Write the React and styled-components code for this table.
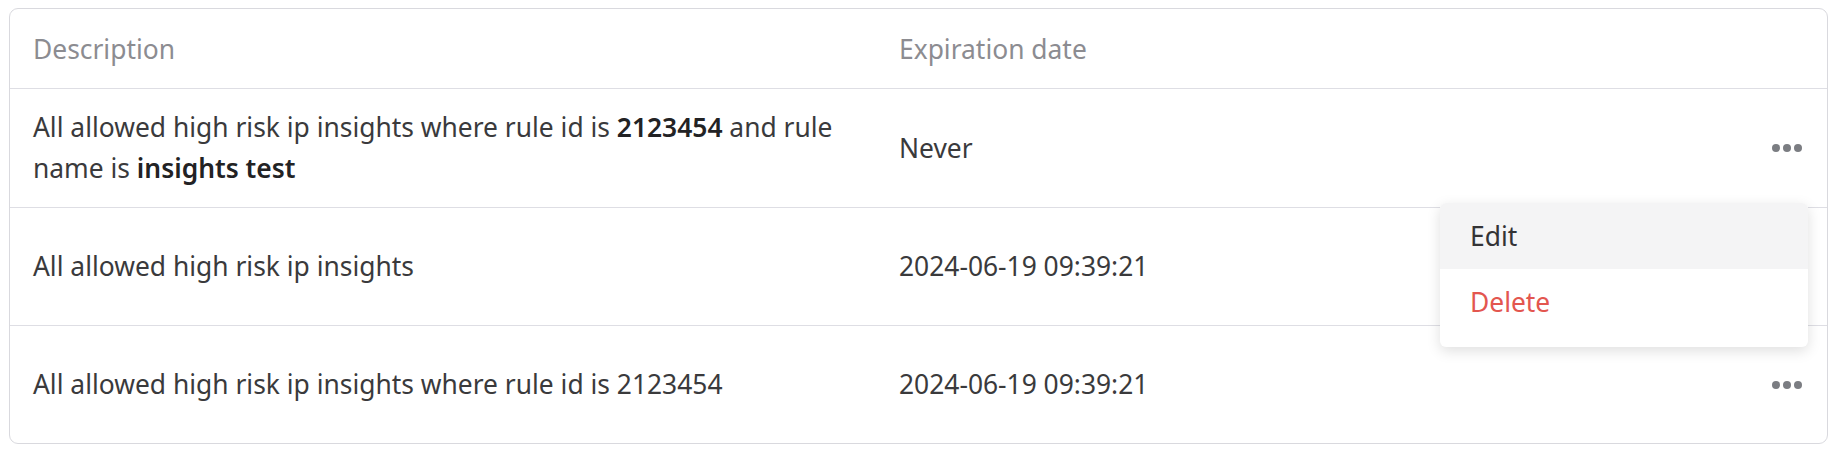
import React from 'react';
import styled, { createGlobalStyle } from "styled-components";

export default function App() {
    const rows = [
        {
            id: 1,
            description: <>All allowed high risk ip insights where rule id is <Strong>2123454</Strong> and rule name is <Strong>insights test</Strong></>,
            expires: "Never",
            menuOpen: true,
        },
        {
            id: 2,
            description: "All allowed high risk ip insights",
            expires: "2024-06-19 09:39:21",
            hideDots: true,
        },
        {
            id: 3,
            description: "All allowed high risk ip insights where rule id is 2123454",
            expires: "2024-06-19 09:39:21",
        },
    ];

    return (
        <>
            <GlobalStyle />
            <Page>
                <TableCard>
                    <HeaderRow>
                        <HeaderCell>Description</HeaderCell>
                        <HeaderCell>Expiration date</HeaderCell>
                        <HeaderCell />
                    </HeaderRow>
                    {rows.map((row, i) => (
                        <Row key={row.id} $last={i === rows.length - 1}>
                            <DescCell>{row.description}</DescCell>
                            <Cell>{row.expires}</Cell>
                            <ActionCell>
                                {!row.hideDots && (
                                    <DotsButton aria-label="More actions">
                                        <Dot /><Dot /><Dot />
                                    </DotsButton>
                                )}
                                {row.menuOpen && (
                                    <Menu>
                                        <MenuItem $active>Edit</MenuItem>
                                        <MenuItem $danger>Delete</MenuItem>
                                    </Menu>
                                )}
                            </ActionCell>
                        </Row>
                    ))}
                </TableCard>
            </Page>
        </>
    );
}

const GlobalStyle = createGlobalStyle`
    body {
        margin: 0;
        background: #ffffff;
        font-family: "Noto Sans", "Open Sans", sans-serif;
    }
`

const Page = styled.div`
    padding: 8px 13px 0 9px;
`

const TableCard = styled.div`
    border: 1px solid #d9d9de;
    border-radius: 9px;
    background: #ffffff;
`

const HeaderRow = styled.div`
    display: grid;
    grid-template-columns: 866px 1fr 100px;
    align-items: center;
    height: 79px;
    border-bottom: 1px solid #dedee4;
`

const HeaderCell = styled.div`
    padding: 0 23px;
    font-size: 26.4px;
    color: #8c8c91;
`

const Row = styled.div`
    display: grid;
    grid-template-columns: 866px 1fr 100px;
    align-items: center;
    min-height: 117px;
    border-bottom: ${props => props.$last ? "none" : "1px solid #dedee4"};
`

const Cell = styled.div`
    padding: 0 23px;
    font-size: 26.4px;
    line-height: 41px;
    color: #3a3a3c;
`

const DescCell = styled(Cell)`
    padding: 18px 23px;
`

const Strong = styled.b`
    font-weight: 600;
    color: #222224;
`

const ActionCell = styled.div`
    position: relative;
    align-self: stretch;
    display: flex;
    align-items: center;
    justify-content: flex-end;
    padding-right: 25px;
`

const DotsButton = styled.button`
    display: flex;
    gap: 3px;
    padding: 0;
    border: none;
    background: none;
    cursor: pointer;
`

const Dot = styled.span`
    width: 8px;
    height: 8px;
    border-radius: 50%;
    background: #7b7d82;
`

const Menu = styled.div`
    position: absolute;
    top: 114px;
    right: 19px;
    z-index: 10;
    width: 368px;
    padding-bottom: 12px;
    background: #ffffff;
    border-radius: 6px;
    box-shadow: 0 4px 14px rgba(0, 0, 0, 0.13);
    overflow: hidden;
`

const MenuItem = styled.div`
    display: flex;
    align-items: center;
    height: 66px;
    padding: 0 30px;
    font-size: 26.4px;
    color: ${props => props.$danger ? "#e3564f" : "#333335"};
    background: ${props => props.$active ? "#f4f4f5" : "#ffffff"};
    cursor: pointer;
`
